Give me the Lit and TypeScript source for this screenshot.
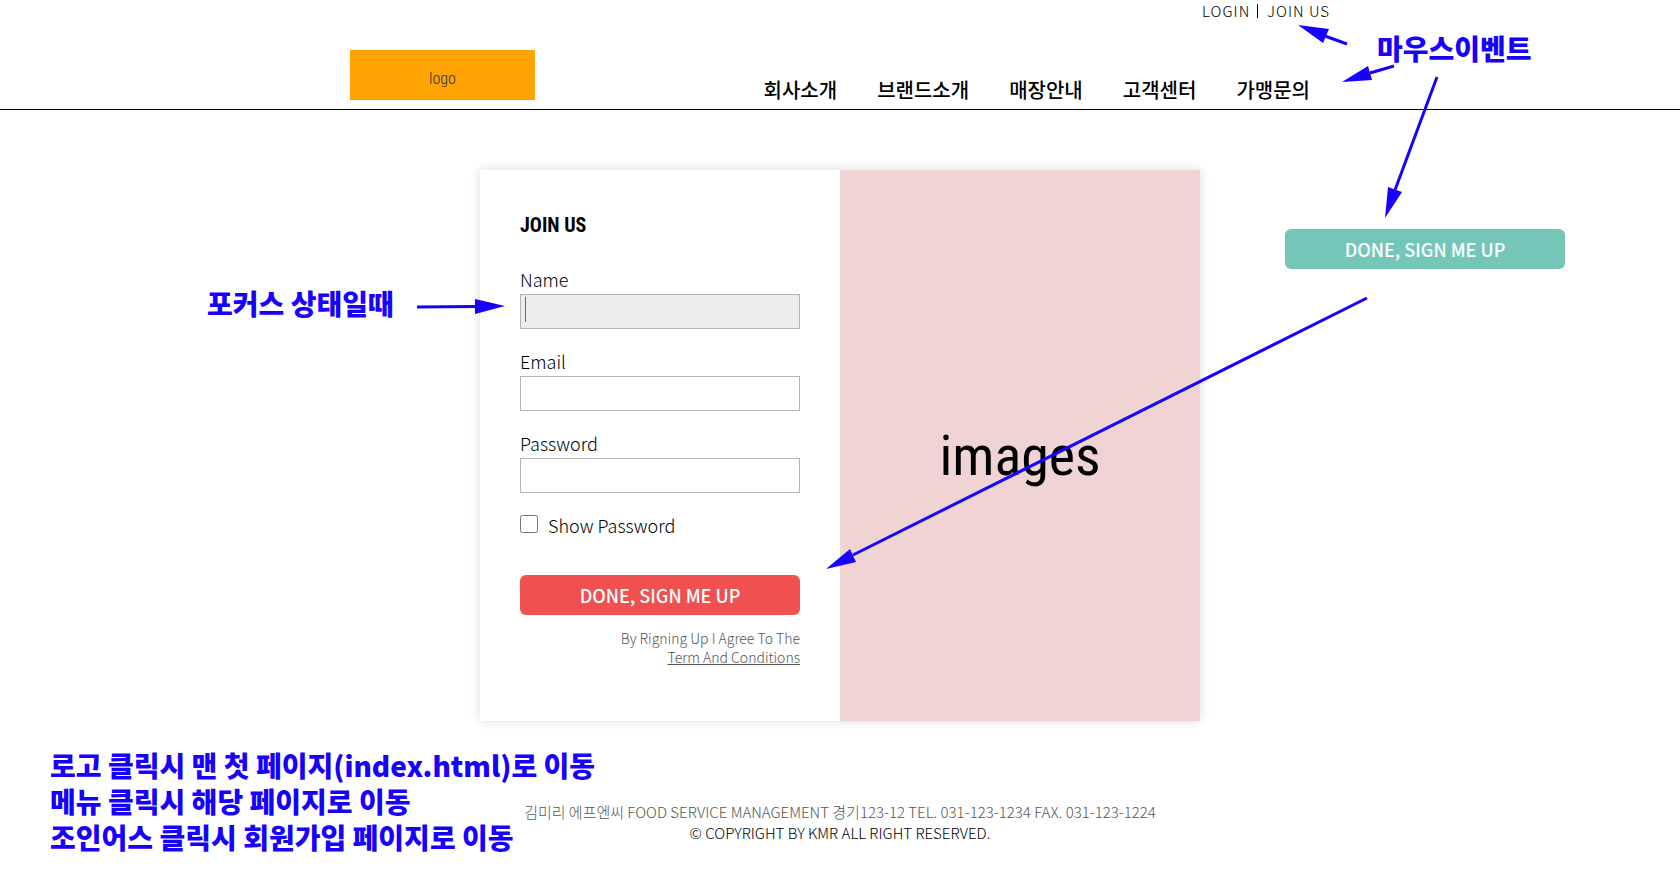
import { LitElement, html, css } from "lit";
import { customElement, state } from "lit/decorators.js";

@customElement("app-root")
export class AppRoot extends LitElement {
  @state() private showPassword = false;

  static styles = css`
    :host {
      display: block;
      position: relative;
      min-height: 100vh;
      overflow: hidden;
      background: #fff;
      color: #000;
      font-family: "Noto Sans CJK KR", "Noto Sans", sans-serif;
      font-size: 15px;
      font-weight: 300;
    }
    * {
      box-sizing: border-box;
    }
    a {
      color: inherit;
      text-decoration: none;
    }
    .header {
      border-bottom: 1px solid #000;
    }
    .bar {
      display: flex;
      justify-content: space-between;
      align-items: flex-end;
      max-width: 980px;
      margin: 0 auto;
    }
    .logo {
      display: flex;
      align-items: center;
      justify-content: center;
      width: 185px;
      height: 50px;
      margin-bottom: 9px;
      padding-top: 6px;
      background: #ffa303;
      color: #1c3138;
      font-family: "Roboto Condensed", "Liberation Sans Narrow", "Liberation Sans", sans-serif;
      font-size: 16px;
      font-weight: 300;
    }
    .menus {
      display: flex;
      flex-direction: column;
      align-items: flex-end;
      gap: 56px;
      padding-bottom: 7px;
    }
    .account {
      display: flex;
      align-items: center;
      line-height: 21px;
      letter-spacing: 1px;
    }
    .account a + a {
      display: flex;
      align-items: center;
    }
    .account a + a::before {
      content: "";
      width: 1px;
      height: 14px;
      margin: 0 9px 0 7px;
      background: #000;
    }
    .nav {
      display: flex;
      font-size: 20px;
      font-weight: 500;
      line-height: 25px;
    }
    .nav a {
      padding: 0 20px;
    }
    .card {
      display: grid;
      grid-template-columns: 1fr 1fr;
      max-width: 720px;
      margin: 60px auto 80px;
      background: #fff;
      box-shadow: 0 0 10px rgba(0, 0, 0, 0.15);
    }
    .form {
      display: flex;
      flex-direction: column;
      padding: 40px 40px 54px;
    }
    .title {
      margin: 0 0 24px;
      font-family: "Roboto Condensed", "Liberation Sans Narrow", "Liberation Sans", sans-serif;
      font-size: 20px;
      font-weight: 700;
      line-height: 30px;
    }
    .field {
      display: flex;
      flex-direction: column;
      margin-bottom: 17px;
      font-size: 18px;
      line-height: 30px;
    }
    .input {
      width: 100%;
      height: 35px;
      padding: 0 4px;
      border: 1px solid #b5b5b5;
      border-radius: 0;
      outline: none;
      background: #fff;
      font: inherit;
    }
    .input.active {
      background: linear-gradient(#ff1493, #ff1493) 4px 2px / 1px 25px no-repeat #ededed;
      caret-color: transparent;
    }
    .check {
      display: flex;
      align-items: center;
      gap: 10px;
      margin-bottom: 35px;
      font-size: 18px;
      line-height: 30px;
    }
    .check input {
      width: 18px;
      height: 18px;
      margin: 0 0 2px;
    }
    .submit {
      width: 280px;
      max-width: 100%;
      height: 40px;
      padding: 0;
      border: 0;
      border-radius: 6px;
      background: #f05050;
      color: #fff;
      font: inherit;
      font-size: 18px;
      font-weight: 500;
      cursor: pointer;
    }
    .submit:hover,
    .submit.hovered {
      background: #74c7b8;
    }
    .terms {
      margin: 14px 0 0;
      color: #555;
      font-size: 14px;
      text-align: right;
      line-height: 19px;
    }
    .terms a {
      display: block;
      text-decoration: underline;
    }
    .picture {
      display: flex;
      align-items: center;
      justify-content: center;
      padding-top: 20px;
      background: #f0d4d4;
      font-family: "Roboto Condensed", "Liberation Sans Narrow", "Liberation Sans", sans-serif;
      font-size: 56px;
      font-weight: 400;
    }
    .footer {
      text-align: center;
      line-height: 21px;
    }
    .footer p {
      margin: 0;
    }
    .company {
      color: #555;
    }
    .notes {
      position: absolute;
      top: 0;
      left: 50%;
      width: 1680px;
      height: 890px;
      margin-left: -840px;
      pointer-events: none;
      color: #1800ff;
      font-size: 28px;
      font-weight: 900;
      line-height: 36px;
    }
    .notes p,
    .notes .hovered {
      position: absolute;
      margin: 0;
      white-space: nowrap;
    }
    .mouse {
      left: 1377px;
      top: 30px;
    }
    .focus {
      left: 207px;
      top: 285px;
    }
    .pages {
      left: 50px;
      top: 747px;
    }
    .notes .hovered {
      left: 1285px;
      top: 229px;
      pointer-events: auto;
    }
    .arrows {
      position: absolute;
      inset: 0;
      fill: #1800ff;
      stroke: #1800ff;
      stroke-width: 3;
    }
    .arrows polygon {
      stroke: none;
    }
  `;

  private togglePassword(e: Event) {
    this.showPassword = (e.target as HTMLInputElement).checked;
  }

  render() {
    const menu = ["회사소개", "브랜드소개", "매장안내", "고객센터", "가맹문의"];
    return html`
      <header class="header">
        <div class="bar">
          <a class="logo" href="#">logo</a>
          <div class="menus">
            <div class="account"><a href="#">LOGIN</a><a href="#">JOIN US</a></div>
            <nav class="nav">${menu.map((m) => html`<a href="#">${m}</a>`)}</nav>
          </div>
        </div>
      </header>
      <main class="card">
        <form class="form">
          <h1 class="title">JOIN US</h1>
          <div class="field">
            <label for="name">Name</label>
            <input class="input active" id="name" type="text" />
          </div>
          <div class="field">
            <label for="email">Email</label>
            <input class="input" id="email" type="email" />
          </div>
          <div class="field">
            <label for="password">Password</label>
            <input class="input" id="password" type=${this.showPassword ? "text" : "password"} />
          </div>
          <div class="check">
            <input id="show" type="checkbox" @change=${this.togglePassword} />
            <label for="show">Show Password</label>
          </div>
          <button class="submit" type="button">DONE, SIGN ME UP</button>
          <p class="terms">By Rigning Up I Agree To The <a href="#">Term And Conditions</a></p>
        </form>
        <div class="picture">images</div>
      </main>
      <footer class="footer">
        <p class="company">김미리 에프엔씨 FOOD SERVICE MANAGEMENT 경기123-12 TEL. 031-123-1234 FAX. 031-123-1224</p>
        <p>© COPYRIGHT BY KMR ALL RIGHT RESERVED.</p>
      </footer>
      <aside class="notes">
        <button class="submit hovered" type="button">DONE, SIGN ME UP</button>
        <p class="mouse">마우스이벤트</p>
        <p class="focus">포커스 상태일때</p>
        <p class="pages">
          로고 클릭시 맨 첫 페이지(index.html)로 이동<br />메뉴 클릭시 해당 페이지로 이동<br />조인어스 클릭시
          회원가입 페이지로 이동
        </p>
        <svg class="arrows" width="1680" height="890" viewBox="0 0 1680 890" aria-hidden="true">
          <path d="M1347 44L1325 36M1394 66L1370 73M1437 77L1395 190M417 307L475 306.5M1367 298L853 555" />
          <polygon points="1298,25 1329,29 1323,43" />
          <polygon points="1342,82 1368,66 1372,80" />
          <polygon points="1385,218 1388,187 1402,192" />
          <polygon points="505,306 475,299 475,314" />
          <polygon points="826,569 850,549 856,562" />
        </svg>
      </aside>
    `;
  }
}
